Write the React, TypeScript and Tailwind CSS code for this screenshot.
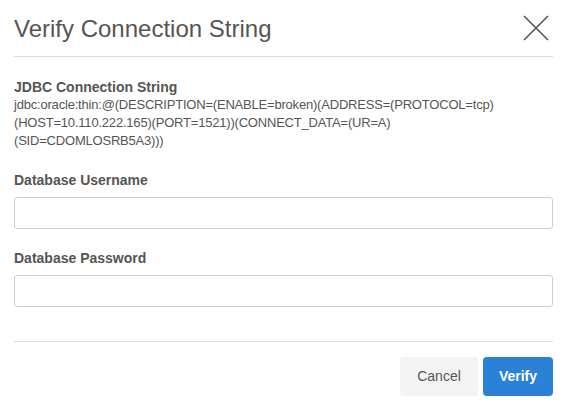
import { useState } from 'react'

export default function App() {
  const [username, setUsername] = useState('')
  const [password, setPassword] = useState('')

  return (
    <div
      className="w-[572px] h-[406px] bg-white text-[#555555] pl-[14px] pr-[19px]"
      style={{ fontFamily: '"Liberation Sans", Arial, sans-serif' }}
    >
      {/* Header */}
      <div className="flex items-center justify-between h-[57px] border-b border-[#dddddd]">
        <h2 className="text-[24px] leading-none font-normal pt-[2px]">Verify Connection String</h2>
        <button type="button" className="w-[26px] h-[26px] mr-[4px] text-[#555555]" aria-label="Close">
          <svg viewBox="0 0 26 26" className="w-[26px] h-[26px]" fill="none" stroke="currentColor" strokeWidth="1.6">
            <path d="M1 1 L25 25 M25 1 L1 25" />
          </svg>
        </button>
      </div>

      {/* Body */}
      <div className="pt-[21px] pb-[34px] border-b border-[#dddddd]">
        <div className="leading-[18px]">
          <div className="text-[14px] font-bold">JDBC Connection String</div>
          <div className="text-[13px] tracking-[-0.2px]">
            jdbc:oracle:thin:@(DESCRIPTION=(ENABLE=broken)(ADDRESS=(PROTOCOL=tcp)
            <br />
            (HOST=10.110.222.165)(PORT=1521))(CONNECT_DATA=(UR=A)
            <br />
            (SID=CDOMLOSRB5A3)))
          </div>
        </div>

        <label className="block mt-[21px]">
          <span className="block text-[14px] leading-[18px] font-bold">Database Username</span>
          <input
            type="text"
            value={username}
            onChange={(e) => setUsername(e.target.value)}
            className="mt-[8px] block w-full h-[32px] rounded-[3px] border border-[#c9ced6] px-2 text-[13px] outline-none"
          />
        </label>

        <label className="block mt-[20px]">
          <span className="block text-[14px] leading-[18px] font-bold">Database Password</span>
          <input
            type="password"
            value={password}
            onChange={(e) => setPassword(e.target.value)}
            className="mt-[8px] block w-full h-[32px] rounded-[3px] border border-[#c9ced6] px-2 text-[13px] outline-none"
          />
        </label>
      </div>

      {/* Footer */}
      <div className="flex justify-end gap-[5px] pt-[15px]">
        <button
          type="button"
          className="h-[39px] w-[78px] rounded-[4px] bg-[#f3f3f3] text-[14px] text-[#555555]"
        >
          Cancel
        </button>
        <button
          type="button"
          className="h-[39px] w-[70px] rounded-[4px] bg-[#2b80d8] text-[14px] font-bold text-white"
        >
          Verify
        </button>
      </div>
    </div>
  )
}
